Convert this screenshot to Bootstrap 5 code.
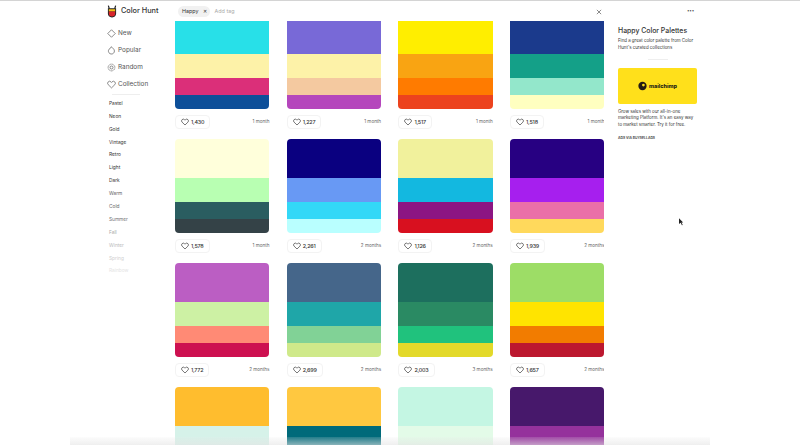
<!DOCTYPE html>
<html lang="en"><head><meta charset="utf-8">
<link href="https://cdn.jsdelivr.net/npm/bootstrap@5.3.0/dist/css/bootstrap.min.css" rel="stylesheet">
<style>
html,body{height:445px;overflow:hidden;background:#fff}
body{font-family:Inter,"Liberation Sans",sans-serif;color:#222;font-size:6px;border-top:1px solid #d4d4d4}
.top-bar{height:20px;padding-left:107px;padding-right:106px}
.brand-area{width:71px;font-size:7.3px;font-weight:500;color:#333;gap:4px}
.tag-chip{background:#f1f1f1;border-radius:6px;height:11px;padding:0 3px 0 4px;font-size:5.4px;gap:4px;color:#333}
.tag-add{font-size:5.4px;color:#aaa;margin-left:5px}
.clear-x{width:8px;margin-right:84px}
.more-dots{font-size:4.500px;color:#555;line-height:1;letter-spacing:-.2px}
.page-body{height:424px}
.side-col{width:175px;padding-left:107px;padding-top:4px}
.side-link{height:17px;font-size:6.4px;color:#555;gap:2px;text-decoration:none}
.side-link svg{width:9px;height:9px;flex:none}
.side-rule{width:28px;height:1px;background:#eee;margin:1px 0 2px 5px}
.tag-link{height:12.9px;font-size:4.8px;padding-left:2px;text-decoration:none;display:flex;align-items:center}
.tag-list a:nth-child(-n+7){color:#333}
.tag-list a:nth-child(8),.tag-list a:nth-child(9){color:#666}
.tag-list a:nth-child(10){color:#777}
.tag-list a:nth-child(11){color:#aaa}
.tag-list a:nth-child(12){color:#bbb}
.tag-list a:nth-child(13){color:#d0d0d0}
.tag-list a:nth-child(14){color:#e4e4e4}
.feed{width:429px;overflow:hidden}
.feed-grid{display:grid;grid-template-columns:repeat(4,94.4px);column-gap:17.3px;margin-top:-5.7px}
.pal-item{height:124px}
.pal{height:94px;border-radius:4px;overflow:hidden;display:flex;flex-direction:column}
.s1{height:38.5px}.s2{height:24.5px}.s3{height:17px}.s4{height:14px}
.dt{background-image:radial-gradient(rgba(255,255,255,.13) .6px,transparent .8px);background-size:2px 2px}
.dk{background-image:radial-gradient(rgba(0,0,0,.05) .6px,transparent .8px);background-size:2px 2px}
.pal-meta{height:14px;margin-top:6px;font-size:4.6px;color:#666}
.like-btn{height:14px;border:1px solid #f3f3f3;border-radius:4px;padding:0 5px;gap:2px;font-size:5.4px;font-weight:500;letter-spacing:-.2px;color:#333;background:#fff}
.like-btn svg{width:8px;height:8px}
.side-info{width:79px;margin-left:14px;padding-top:5px}
.info-title{font-size:6.9px;font-weight:500;color:#333;margin:0 0 2px;line-height:10px}
.info-text{font-size:4.4px;line-height:6.8px;color:#333;margin:0}
.info-rule{width:20px;height:1px;background:#eee;margin:7px auto 8px}
.ad-box{height:36px;background:#ffe01b;border-radius:2px;margin-bottom:5px;gap:2px;font-size:5.4px;font-weight:800;color:#241c15}
.ad-note{font-size:3.4px;font-weight:600;color:#333;margin-top:7px}
.cursor-mark{position:fixed;left:679px;top:218px;width:5px;height:8px}
.bottom-fade{position:fixed;left:70px;right:90px;bottom:0;height:8px;background:linear-gradient(to bottom,rgba(235,235,235,.15),rgba(228,228,228,.6))}
</style></head>
<body>
<header class="top-bar d-flex align-items-center">
  <div class="brand-area d-flex align-items-center">
    <svg width="10" height="13" viewBox="0 0 11 14"><path d="M1.500 .5 L2.500 4 M9.500 .5 L8.500 4" stroke="#222" stroke-width="1.300"/><path d="M1 3.500h9v5.500a4.500 4.500 0 0 1-9 0z" fill="#222"/><path d="M2 4.500h7v2.500h-7z" fill="#f5c21b"/><path d="M2 7h7v2a3.500 3.500 0 0 1-7 0z" fill="#d8252b"/></svg>
    <span>Color Hunt</span>
  </div>
  <div class="d-flex align-items-center flex-grow-1">
    <span class="tag-chip d-inline-flex align-items-center">Happy <span>✕</span></span>
    <span class="tag-add">Add tag</span>
  </div>
  <span class="clear-x text-center"><svg width="6" height="6" viewBox="0 0 7 7"><path d="M1 1l5 5M6 1L1 6" stroke="#555" stroke-width=".8"/></svg></span>
  <span class="more-dots">•••</span>
</header>
<div class="page-body d-flex">
  <nav class="side-col">
    <a class="side-link d-flex align-items-center" href="#"><svg viewBox="0 0 12 12" fill="none" stroke="#555" stroke-width=".9"><path d="M6 1l5 5-5 5-5-5z"/></svg>New</a>
    <a class="side-link d-flex align-items-center" href="#"><svg viewBox="0 0 12 12" fill="none" stroke="#555" stroke-width=".9"><path d="M4 3.200a4 4 0 1 0 4.500 .5"/><path d="M4 3.200c1-.4 1.500-1.200 1.600-2.200 1 .6 2.200 1.600 2.900 2.700"/></svg>Popular</a>
    <a class="side-link d-flex align-items-center" href="#"><svg viewBox="0 0 12 12" fill="none" stroke="#555" stroke-width=".9"><circle cx="6" cy="6" r="4.500" stroke-dasharray="1.500 .6"/><circle cx="6" cy="6" r="2"/></svg>Random</a>
    <a class="side-link d-flex align-items-center" href="#"><svg viewBox="0 0 12 12" fill="none" stroke="#555" stroke-width=".9"><path d="M6 10.500L1.600 6.200a2.600 2.600 0 0 1 3.700-3.700l.7.7.7-.7a2.600 2.600 0 0 1 3.700 3.700z"/></svg>Collection</a>
    <div class="side-rule"></div>
    <div class="tag-list">
      <a class="tag-link" href="#">Pastel</a><a class="tag-link" href="#">Neon</a><a class="tag-link" href="#">Gold</a><a class="tag-link" href="#">Vintage</a><a class="tag-link" href="#">Retro</a><a class="tag-link" href="#">Light</a><a class="tag-link" href="#">Dark</a><a class="tag-link" href="#">Warm</a><a class="tag-link" href="#">Cold</a><a class="tag-link" href="#">Summer</a><a class="tag-link" href="#">Fall</a><a class="tag-link" href="#">Winter</a><a class="tag-link" href="#">Spring</a><a class="tag-link" href="#">Rainbow</a>
    </div>
  </nav>
  <main class="feed">
    <div class="feed-grid" id="g"></div>
  </main>
  <aside class="side-info">
    <h1 class="info-title">Happy Color Palettes</h1>
    <p class="info-text">Find a great color palette from Color Hunt's curated collections</p>
    <div class="info-rule"></div>
    <div class="ad-box d-flex align-items-center justify-content-center">
      <svg width="9" height="10" viewBox="0 0 10 10"><circle cx="5" cy="5" r="4.600" fill="#241c15"/><circle cx="6" cy="4" r="1.500" fill="#ffe01b"/></svg><span>mailchimp</span>
    </div>
    <p class="info-text">Grow sales with our all-in-one marketing Platform. It's an easy way to market smarter. Try it for free.</p>
    <div class="ad-note">ADS VIA BUYSELLADS</div>
  </aside>
</div>
<svg class="cursor-mark" viewBox="0 0 6 9"><path d="M0 0l5 5H3l1.500 3-1 .5L2 5.500 0 7z" fill="#222"/></svg>
<div class="bottom-fade"></div>
<script>
var d=[
[["#28e0e8"],["#fdf2a8"],["#e0307c","k"],["#0d4f99"],"1,430","1 month"],
[["#7060d4","t"],["#fdf2a8"],["#f4c9a0"],["#b03ab8","t"],"1,227","1 month"],
[["#ffee00"],["#ffa812","k"],["#ff7b00"],["#f2451f","k"],"1,517","1 month"],
[["#1b3a8c"],["#14a088"],["#97edd0","k"],["#ffffc0"],"1,518","1 month"],
[["#ffffdb"],["#b8ffb2"],["#2b5f62","k"],["#27363c","t"],"1,578","1 month"],
[["#0a0080"],["#6b9dfa","k"],["#33d8f7"],["#b9ffff"],"2,261","2 months"],
[["#f7f7a0","k"],["#13b8e0"],["#8c1583"],["#dd1020","k"],"1,126","2 months"],
[["#270082"],["#a61fee"],["#ea6fa8"],["#ffd95c"],"1,939","2 months"],
[["#c060c8","k"],["#d2f7a8","k"],["#ff8a75"],["#d21052","k"],"1,772","2 months"],
[["#45668a"],["#1fa6a8"],["#84d79a","k"],["#cfe98a"],"2,699","2 months"],
[["#0f6654","t"],["#2a8a63"],["#20c27d"],["#e3d92a"],"2,003","3 months"],
[["#9ddd66"],["#ffe400"],["#f27c00"],["#b80a22","t"],"1,657","2 months"],
[["#ffbd2e"],["#d6f2e9"],["#fff"],["#fff"],"",""],
[["#ffc840"],["#006a7a"],["#fff"],["#fff"],"",""],
[["#c4f6e3"],["#e3fbe8"],["#fff"],["#fff"],"",""],
[["#3c0a62","t"],["#8e2596","t"],["#fff"],["#fff"],"",""]];
var h="";
d.forEach(function(p){
 var s="";
 for(var i=0;i<4;i++){s+='<div class="s'+(i+1)+(p[i][1]=="t"?" dt":p[i][1]=="k"?" dk":"")+'" style="background-color:'+p[i][0]+'"></div>';}
 h+='<div class="pal-item"><div class="pal">'+s+'</div>'+(p[4]?'<div class="pal-meta d-flex align-items-center justify-content-between"><span class="like-btn d-inline-flex align-items-center"><svg viewBox="0 0 12 12" fill="none" stroke="#333" stroke-width="1"><path d="M6 10.500L1.600 6.200a2.600 2.600 0 0 1 3.700-3.700l.7.7.7-.7a2.600 2.600 0 0 1 3.700 3.700z"/></svg>'+p[4]+'</span><span>'+p[5]+'</span></div>':'')+'</div>';
});
document.getElementById("g").innerHTML=h;
</script>
<script src="https://cdn.jsdelivr.net/npm/bootstrap@5.3.0/dist/js/bootstrap.bundle.min.js"></script>
</body></html>
